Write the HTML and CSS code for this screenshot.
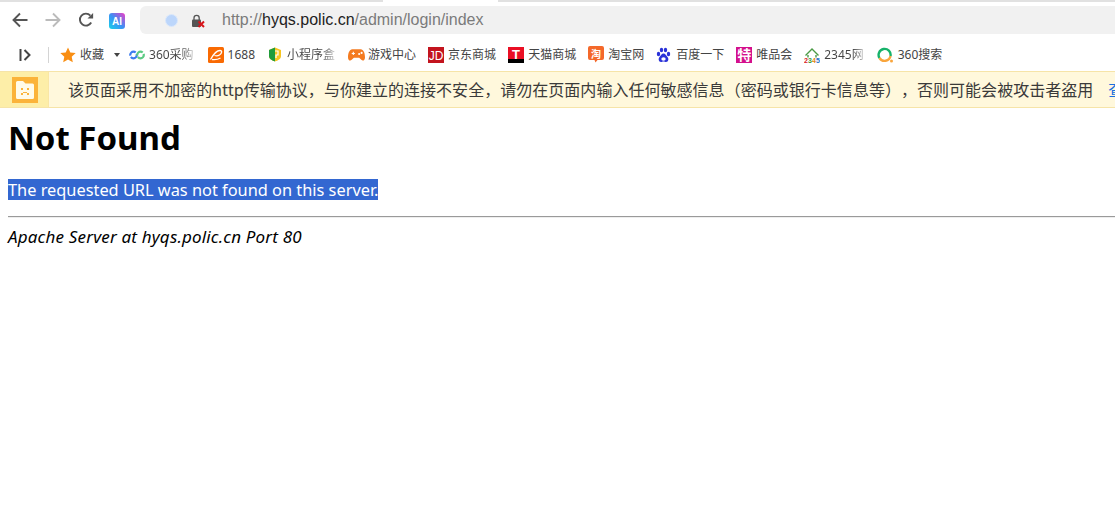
FILE: index.html
```html
<!DOCTYPE html>
<html lang="zh">
<head>
<meta charset="utf-8">
<title>Not Found</title>
<link rel="stylesheet" href="styles.css">
</head>
<body>
<header class="chrome">
  <div class="tabstrip"><span class="tabstrip-gap"></span></div>
  <div class="toolbar">
    <svg class="nav nav-back" width="18" height="18" viewBox="0 0 18 18"><path d="M16.500 9H2.500M9 2.500 2.500 9 9 15.500" fill="none" stroke="#555" stroke-width="1.900"/></svg>
    <svg class="nav nav-fwd" width="18" height="18" viewBox="0 0 18 18"><path d="M1.500 9h14M9 2.500 15.500 9 9 15.500" fill="none" stroke="#bbb" stroke-width="1.900"/></svg>
    <svg class="nav nav-reload" width="16" height="16" viewBox="0 0 16 16"><path d="M13.200 10.500A6 6 0 1 1 12.400 3.600" fill="none" stroke="#555" stroke-width="1.900"/><path d="M9.500 6.600h5.600V1z" fill="#555"/></svg>
    <svg class="ai-logo" width="16" height="16" viewBox="0 0 16 16"><defs><linearGradient id="aig" x1="0" y1="1" x2="1" y2="0"><stop offset="0" stop-color="#17d3e8"/><stop offset=".5" stop-color="#3d8ff5"/><stop offset="1" stop-color="#f23bc4"/></linearGradient></defs><rect width="16" height="16" rx="3" fill="url(#aig)"/><text class="ai-text" x="8" y="12">AI</text></svg>
    <div class="omnibox">
      <span class="site-dot"></span>
      <svg class="lock" width="14" height="14" viewBox="0 0 14 14"><path d="M3 6V4a2.600 2.600 0 0 1 5.200 0v2" fill="none" stroke="#555" stroke-width="1.300"/><rect x="1" y="5.500" width="9" height="7.500" rx="1" fill="#555"/><path d="M7.500 7.500l5.500 5.500M13 7.500 7.500 13" stroke="#d7151b" stroke-width="2"/></svg>
      <span class="url">http://<b>hyqs.polic.cn</b>/admin/login/index</span>
    </div>
  </div>
  <nav class="bookmarks">
    <svg class="sidebar-toggle" width="12" height="12" viewBox="0 0 12 12"><path d="M1.500 0v12" stroke="#444" stroke-width="2"/><path d="M5.500 1 10.500 6 5.500 11" fill="none" stroke="#444" stroke-width="2"/></svg>
    <span class="sep"></span>
    <span class="bm bm-fav">
      <svg width="16" height="16" viewBox="0 0 16 16"><path d="M8 .5l2.300 5 5.400.6-4 3.700 1.100 5.400L8 12.500l-4.800 2.700 1.100-5.400-4-3.700 5.400-.6z" fill="#f98e13"/></svg>
      <span>收藏</span><i class="caret"></i>
    </span>
    <span class="bm bm-360">
      <svg width="16" height="12" viewBox="0 0 16 12"><circle cx="4.500" cy="6" r="3.300" fill="none" stroke="#3c7cf0" stroke-width="2.200" stroke-dasharray="8 1.500"/><circle cx="11.500" cy="6" r="3.300" fill="none" stroke="#5ccb84" stroke-width="2.200" stroke-dasharray="8 1.500"/></svg>
      <span class="fade">360采购</span>
    </span>
    <span class="bm bm-1688">
      <svg width="16" height="16" viewBox="0 0 16 16"><rect width="16" height="16" rx="1.500" fill="#f96a03"/><path d="M2.500 12.500C5 8 8 3.500 12 3.500c2.500 0 2 3-.5 4.500-1.500 1-3.500 1-5 .5M4 12.500c3 .5 6 0 8.500-1.500" fill="none" stroke="#fff" stroke-width="1.300"/></svg>
      <span>1688</span>
    </span>
    <span class="bm bm-mini">
      <svg width="14" height="15" viewBox="0 0 14 15"><path d="M7 .5 13 3v6c0 3-3 4.500-6 5.500C4 13.500 1 12 1 9V3z" fill="#f7c520"/><path d="M7 .5 1 3v6c0 3 3 4.500 6 5.500z" fill="#1f9c3c"/><path d="M7 4h3v4H8v3" fill="none" stroke="#fff" stroke-width="1.200"/></svg>
      <span class="fade">小程序盒</span>
    </span>
    <span class="bm bm-game">
      <svg width="17" height="14" viewBox="0 0 16 13"><path d="M4 1h8c2.500 0 4 3.500 4 7.500 0 3-2 4-3.500 2.500L10.500 9h-5L3.500 11C2 12.500 0 11.500 0 8.500 0 4.500 1.500 1 4 1z" fill="#f47b20"/><path d="M3.500 5h3M5 3.500v3" stroke="#fff" stroke-width="1"/><circle cx="10.500" cy="5.500" r="1" fill="#fff"/><circle cx="12.800" cy="4.500" r="1" fill="#fff"/></svg>
      <span>游戏中心</span>
    </span>
    <span class="bm bm-jd">
      <svg width="16" height="16" viewBox="0 0 16 16"><rect width="16" height="16" fill="#c3141e"/><text class="jd-text" x="8" y="12.500">JD</text></svg>
      <span>京东商城</span>
    </span>
    <span class="bm bm-tmall">
      <svg width="16" height="16" viewBox="0 0 16 16"><rect width="16" height="16" fill="#ea0f24"/><rect y="12" width="16" height="4" fill="#000"/><text class="t-text" x="8" y="12">T</text></svg>
      <span>天猫商城</span>
    </span>
    <span class="bm bm-taobao">
      <svg width="16" height="17" viewBox="0 0 16 17"><path d="M2 0h12a2 2 0 0 1 2 2v10a2 2 0 0 1-2 2H9.500L7.500 16.500 6.500 14H2a2 2 0 0 1-2-2V2a2 2 0 0 1 2-2z" fill="#f4682a"/><text class="tao-text" x="8" y="11.500">淘</text></svg>
      <span>淘宝网</span>
    </span>
    <span class="bm bm-baidu">
      <svg width="15" height="16" viewBox="0 0 14 16"><g fill="#2a32d8"><ellipse cx="2" cy="7" rx="1.700" ry="2.200"/><ellipse cx="5" cy="3" rx="1.700" ry="2.300"/><ellipse cx="9" cy="3" rx="1.700" ry="2.300"/><ellipse cx="12" cy="7" rx="1.700" ry="2.200"/><path d="M7 6.500c2 0 2.500 2 4 3.500 1.500 1.500 1 5-1.500 5-1 0-1.500-.5-2.500-.5S5.500 15 4.500 15C2 15 1.500 11.500 3 10c1.500-1.500 2-3.500 4-3.500z"/></g><ellipse cx="7" cy="12" rx="2.200" ry="1.800" fill="#fff"/></svg>
      <span>百度一下</span>
    </span>
    <span class="bm bm-vip">
      <span class="vip-mark">特</span>
      <span>唯品会</span>
    </span>
    <span class="bm bm-2345">
      <svg width="16" height="16" viewBox="0 0 16 16"><path d="M1.500 8.500 8 2l6.500 6.500M4 8v2.500M12 8v2.500" fill="none" stroke="#4a9a45" stroke-width="1.400"/><text class="num-text" y="16"><tspan x="0" fill="#d8231f">2</tspan><tspan x="4" fill="#3a9a3a">3</tspan><tspan x="8" fill="#e08a12">4</tspan><tspan x="12" fill="#2470c8">5</tspan></text></svg>
      <span class="fade">2345网</span>
    </span>
    <span class="bm bm-so">
      <svg width="16" height="16" viewBox="0 0 16 16"><path d="M2.500 11A6 6 0 1 1 13.500 9" fill="none" stroke="#17b26a" stroke-width="2.400"/><path d="M13.500 9A6 6 0 0 1 2.500 11" fill="none" stroke="#f9a53c" stroke-width="2.400"/><circle cx="14.500" cy="14" r="1.500" fill="#f9a53c"/></svg>
      <span>360搜索</span>
    </span>
  </nav>
  <div class="infobar">
    <div class="info-cell">
      <div class="info-icon">
        <svg width="18" height="18" viewBox="0 0 18 18"><path d="M0 1.500A1.500 1.500 0 0 1 1.500 0H7l2.500 2.500h7A1.500 1.500 0 0 1 18 4v12.500a1.500 1.500 0 0 1-1.500 1.500h-15A1.500 1.500 0 0 1 0 16.500z" fill="#fffbea"/><path d="M5 7h2v2H5zM11 7h2v2h-2zM5 14v-2h2v-1h4v1h2v2h-2v-2H7v2z" fill="#fbb33a"/></svg>
      </div>
    </div>
    <p class="info-text">该页面采用不加密的http传输协议，与你建立的连接不安全，请勿在页面内输入任何敏感信息（密码或银行卡信息等），否则可能会被攻击者盗用</p>
    <a class="info-link">查看详情</a>
  </div>
</header>
<main class="doc">
  <h1>Not Found</h1>
  <p class="msg"><span class="selected">The requested URL was not found on this server.</span></p>
  <hr>
  <address>Apache Server at hyqs.polic.cn Port 80</address>
</main>
</body>
</html>
```
FILE: styles.css
```css
* { box-sizing: border-box; }
html, body { margin: 0; padding: 0; width: 1115px; height: 512px; overflow: hidden; background: #fff; }
body { font-family: "Noto Sans", "Noto Sans CJK SC", sans-serif; color: #000; }

.chrome { display: flex; flex-direction: column; }
.tabstrip { height: 2px; background: #e1e1e1; display: flex; }
.tabstrip-gap { width: 115px; margin-left: 383px; background: #fff; }

.toolbar { height: 36px; display: flex; align-items: center; padding-left: 11px; }
.nav { flex: none; display: block; }
.nav-fwd { margin-left: 15px; }
.nav-reload { margin-left: 16px; }
.ai-logo { margin: 1px 0 0 15px; flex: none; }
.ai-text { font: 700 10px "Liberation Sans", sans-serif; fill: #fff; text-anchor: middle; }
.omnibox { margin-left: 15px; flex: 1; height: 28px; background: #f1f1f1; border-radius: 6px 0 0 6px; display: flex; align-items: center; padding-left: 25px; }
.site-dot { width: 13px; height: 13px; margin-top: 1px; border-radius: 50%; background: #bcd6fb; border: 1px solid #dbe8fb; flex: none; }
.lock { margin: 1px 0 0 13px; flex: none; }
.url { margin-left: 17px; font: 16px/20px "Liberation Sans", "Noto Sans", sans-serif; color: #7b7b7b; }
.url b { font-weight: 400; color: #222; }

.bookmarks { height: 33px; display: flex; align-items: center; padding-left: 19px; font: 12px/16px "Noto Sans", "Noto Sans CJK SC", sans-serif; color: #444; }
.sidebar-toggle { flex: none; }
.sep { width: 1px; height: 16px; background: #d4d4d4; margin-left: 17px; }
.bm { display: flex; align-items: center; gap: 4px; white-space: nowrap; flex: none; }
.bm svg { flex: none; }
.bm-fav { margin-left: 11px; }
.caret { width: 0; height: 0; border: 3.500px solid transparent; border-top: 4px solid #444; border-bottom: 0; margin-left: 6px; }
.bm-360 { margin-left: 9px; }
.bm-1688 { margin-left: 14px; }
.bm-mini { margin-left: 13px; gap: 5px; }
.bm-game { margin-left: 13px; gap: 3px; }
.bm-jd { margin-left: 12px; }
.bm-tmall { margin-left: 12px; }
.bm-taobao { margin-left: 12px; }
.bm-baidu { margin-left: 12px; gap: 5px; }
.bm-vip { margin-left: 12px; }
.bm-2345 { margin-left: 12px; }
.bm-so { margin-left: 13px; gap: 5px; }
.jd-text { font: 400 12px "Liberation Sans", sans-serif; fill: #fff; text-anchor: middle; }
.t-text { font: 700 13px "Liberation Sans", sans-serif; fill: #fff; text-anchor: middle; }
.tao-text { font: 700 10px "Noto Sans CJK SC", sans-serif; fill: #fff; text-anchor: middle; }
.num-text { font: 700 7px "Liberation Sans", sans-serif; }
.vip-mark { width: 16px; height: 16px; background: #d4108c; color: #fff; font-size: 14px; font-weight: 700; line-height: 16px; text-align: center; }
.fade { color: transparent; background: linear-gradient(90deg, #444 72%, #ccc 100%); -webkit-background-clip: text; background-clip: text; }

.infobar { height: 37px; background: #fff8dc; border-top: 1px solid #f6e4a8; border-bottom: 1px solid #f6e4a8; display: flex; align-items: center; overflow: hidden; }
.info-cell { width: 49px; height: 35px; flex: none; background: #fdeea8; border-right: 1px solid #f9e6a5; display: flex; align-items: center; padding-left: 12px; }
.info-icon { width: 26px; height: 26px; background: #fbb33a; display: flex; align-items: center; justify-content: center; }
.info-text { margin: 0 0 2px 19px; flex: none; font: 16px/20px "Noto Sans CJK SC", sans-serif; color: #3a3a3a; white-space: nowrap; text-spacing-trim: space-all; letter-spacing: .03px; }
.info-link { margin: 0 0 2px 15px; flex: none; font: 16px/20px "Noto Sans CJK SC", sans-serif; color: #1a6fe0; white-space: nowrap; }

.doc { padding: 0 0 0 8px; }
h1 { margin: 9px 0 0; font-size: 33px; line-height: 42px; font-weight: 700; }
.msg { margin: 20px 0 0; font-size: 16.35px; height: 21px; }
.selected { display: inline-block; background: #3367d1; color: #fff; padding-top: 1px; line-height: 20px; vertical-align: top; }
hr { margin: 16px 0 0; border: 0; border-top: 1px solid #9a9a9a; border-bottom: 1px solid #eee; height: 2px; }
address { margin-top: 8px; font-size: 17px; line-height: 21px; font-style: italic; letter-spacing: .18px; }
```
